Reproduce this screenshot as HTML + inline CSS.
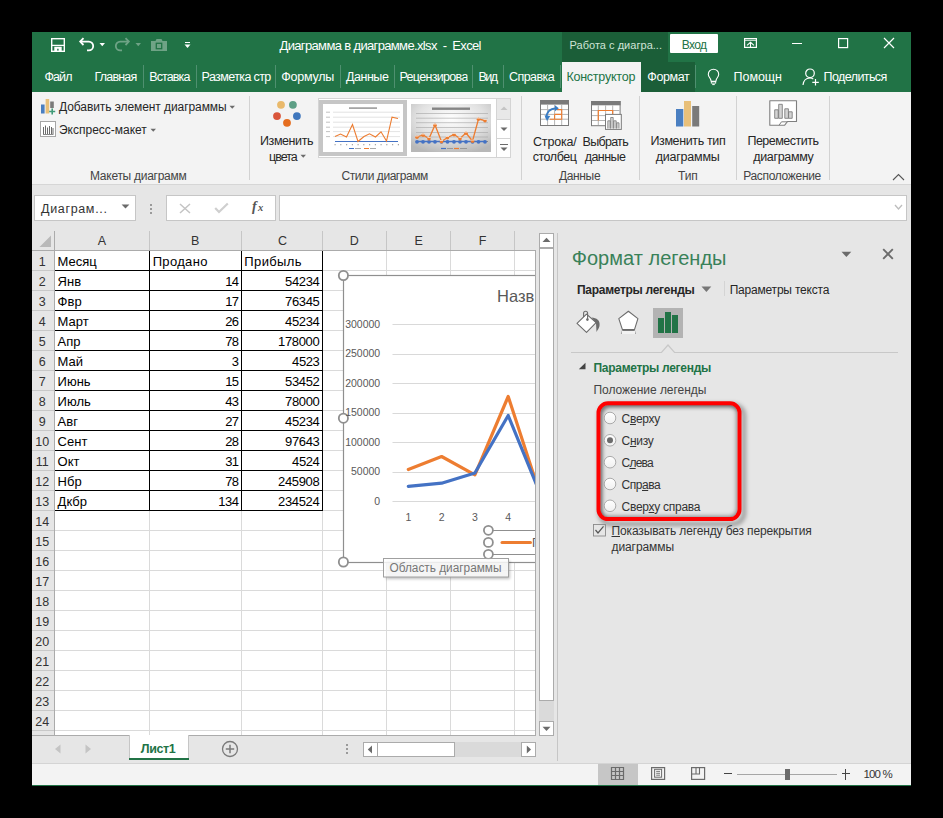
<!DOCTYPE html>
<html><head><meta charset="utf-8"><style>
html,body{margin:0;padding:0;}
body{width:943px;height:818px;background:#000;position:relative;overflow:hidden;font-family:"Liberation Sans",sans-serif;}
body>div,body>span,body>svg{position:absolute;}
span{white-space:pre;}
</style></head><body>
<div style="left:32px;top:32px;width:879px;height:754px;background:#e6e6e6;"></div>
<div style="left:32px;top:32px;width:879px;height:60px;background:#217346;"></div>
<div style="left:562px;top:32px;width:106px;height:30px;background:#1b5e38;"></div>
<div style="left:562px;top:62px;width:79px;height:30px;background:#f3f3f3;"></div>
<div style="left:641px;top:62px;width:54px;height:30px;background:#1b5e38;"></div>
<svg style="left:48px;top:35px" width="50" height="20" viewBox="48 35 50 20"><rect x="51.7" y="38.7" width="12.6" height="12.6" fill="none" stroke="#fff" stroke-width="1.4"/><line x1="51.7" y1="45.4" x2="64.3" y2="45.4" stroke="#fff" stroke-width="1.3"/><path d="M54.3 46.8 H61.7 V51.3 H58.6 V48.8 H57.2 V51.3 H54.3 Z" fill="#fff"/><path d="M83.5 38.2 L80.2 41.6 L83.5 45" fill="none" stroke="#fff" stroke-width="1.8" stroke-linejoin="miter"/><path d="M80.8 41.6 H88.8 A4.4 4.4 0 0 1 88.8 50.4 H87" fill="none" stroke="#fff" stroke-width="1.8"/></svg>
<svg style="left:99px;top:42px" width="7" height="5"><path d="M0.5 1 H6 L3.25 4.2Z" fill="#fff"/></svg>
<svg style="left:112px;top:35px" width="20" height="20" viewBox="112 35 20 20"><path d="M125.5 38.2 L128.8 41.6 L125.5 45" fill="none" stroke="#6fa386" stroke-width="1.8"/><path d="M128.2 41.6 H120.2 A4.4 4.4 0 0 0 120.2 50.4 H122" fill="none" stroke="#6fa386" stroke-width="1.8"/></svg>
<svg style="left:135px;top:42px" width="7" height="5"><path d="M0.5 1 H6 L3.25 4.2Z" fill="#6fa386"/></svg>
<svg style="left:150px;top:38px" width="18" height="14" viewBox="0 0 18 14"><path d="M1 3 H5.5 L6.5 1 H11.5 L12.5 3 H17 V13 H1 Z" fill="#6fa386"/><rect x="6.3" y="5.3" width="5.4" height="5.4" fill="none" stroke="#217346" stroke-width="1.3"/></svg>
<div style="left:185px;top:42px;width:5px;height:1.3px;background:#fff;"></div>
<svg style="left:184px;top:44px" width="7" height="5"><path d="M0.5 0.5 H6.5 L3.5 4Z" fill="#fff"/></svg>
<span style="left:279.50px;top:39.00px;font-size:13px;line-height:13px;color:#fff;letter-spacing:-0.649px;">Диаграмма в диаграмме.xlsx  -  Excel</span>
<span style="left:569.50px;top:40.00px;font-size:11px;line-height:11px;color:#cfe3d6;letter-spacing:0.029px;">Работа с диагра...</span>
<div style="left:670px;top:34px;width:48px;height:19px;background:#fff;border-radius:1px;"></div>
<span style="left:681.70px;top:39.00px;font-size:12px;line-height:12px;color:#217346;letter-spacing:-0.600px;">Вход</span>
<svg style="left:743px;top:37px" width="16" height="13" viewBox="743 37 16 13"><rect x="744.6" y="38.6" width="11.8" height="8.8" fill="none" stroke="#fff" stroke-width="1.2"/><line x1="744.6" y1="40.3" x2="756.4" y2="40.3" stroke="#fff" stroke-width="0.9"/><path d="M750.5 42.5 V47.5 M747 45.3 L750.5 42.3 L754 45.3" fill="none" stroke="#fff" stroke-width="1.1"/></svg>
<div style="left:792px;top:43px;width:10px;height:1.2px;background:#fff;"></div>
<svg style="left:837px;top:37px" width="12" height="12"><rect x="1.6" y="1.6" width="9" height="9" fill="none" stroke="#fff" stroke-width="1.2"/></svg>
<svg style="left:883px;top:37px" width="12" height="12"><path d="M1 1 L11 11 M11 1 L1 11" stroke="#fff" stroke-width="1.2"/></svg>
<span style="left:44.40px;top:71.00px;font-size:12.5px;line-height:12.5px;color:#fff;letter-spacing:-0.900px;">Файл</span>
<span style="left:94.50px;top:71.00px;font-size:12.5px;line-height:12.5px;color:#fff;letter-spacing:-0.800px;">Главная</span>
<span style="left:149.30px;top:71.00px;font-size:12.5px;line-height:12.5px;color:#fff;letter-spacing:-0.900px;">Вставка</span>
<span style="left:201.60px;top:71.00px;font-size:12.5px;line-height:12.5px;color:#fff;letter-spacing:-0.609px;">Разметка стр</span>
<span style="left:281.30px;top:71.00px;font-size:12.5px;line-height:12.5px;color:#fff;letter-spacing:-0.233px;">Формулы</span>
<span style="left:345.90px;top:71.00px;font-size:12.5px;line-height:12.5px;color:#fff;letter-spacing:-0.440px;">Данные</span>
<span style="left:399.40px;top:71.00px;font-size:12.5px;line-height:12.5px;color:#fff;letter-spacing:-0.670px;clip-path:inset(0 0 0 0);">Рецензирова</span>
<div style="left:467.6px;top:66px;width:4px;height:20px;background:#217346;"></div>
<span style="left:478.40px;top:71.00px;font-size:12.5px;line-height:12.5px;color:#fff;letter-spacing:-1.500px;">Вид</span>
<span style="left:509.00px;top:71.00px;font-size:12.5px;line-height:12.5px;color:#fff;letter-spacing:-0.550px;">Справка</span>
<span style="left:566.40px;top:71.00px;font-size:12.5px;line-height:12.5px;color:#217346;letter-spacing:-0.230px;">Конструктор</span>
<span style="left:647.30px;top:71.00px;font-size:12.5px;line-height:12.5px;color:#fff;letter-spacing:-0.400px;">Формат</span>
<span style="left:733.60px;top:71.00px;font-size:12.5px;line-height:12.5px;color:#fff;letter-spacing:-0.060px;">Помощн</span>
<span style="left:823.60px;top:71.00px;font-size:12.5px;line-height:12.5px;color:#fff;letter-spacing:-0.600px;">Поделиться</span>
<div style="left:143px;top:65px;width:1px;height:23px;background:#4f9070;"></div>
<div style="left:196px;top:65px;width:1px;height:23px;background:#4f9070;"></div>
<div style="left:275px;top:65px;width:1px;height:23px;background:#4f9070;"></div>
<div style="left:340px;top:65px;width:1px;height:23px;background:#4f9070;"></div>
<div style="left:394px;top:65px;width:1px;height:23px;background:#4f9070;"></div>
<div style="left:472px;top:65px;width:1px;height:23px;background:#4f9070;"></div>
<div style="left:503px;top:65px;width:1px;height:23px;background:#4f9070;"></div>
<div style="left:560px;top:65px;width:1px;height:23px;background:#4f9070;"></div>
<div style="left:695px;top:65px;width:1px;height:23px;background:#4f9070;"></div>
<svg style="left:706px;top:68px" width="16" height="19" viewBox="706 68 16 19"><path d="M711.2 81.3 L710.5 79 C709.3 77.2 708.3 76 708.3 74.4 A5.2 5.2 0 0 1 718.7 74.4 C718.7 76 717.7 77.2 716.5 79 L715.8 81.3 Z" fill="none" stroke="#fff" stroke-width="1.1" stroke-linejoin="round"/><rect x="711.3" y="81.5" width="4.4" height="1.6" fill="none" stroke="#fff" stroke-width="0.9"/><line x1="712.2" y1="84.6" x2="714.8" y2="84.6" stroke="#fff" stroke-width="1"/></svg>
<svg style="left:802px;top:68px" width="18" height="18" viewBox="0 0 18 18"><circle cx="8" cy="5.3" r="4.3" fill="none" stroke="#fff" stroke-width="1.2"/><path d="M1 17 C1.5 12.5 4 10 8 10 C9.5 10 10.5 10.4 11.3 10.9" fill="none" stroke="#fff" stroke-width="1.2"/><path d="M13.5 11 V17.5 M10.3 14.3 H16.8" stroke="#fff" stroke-width="1.2"/></svg>
<div style="left:32px;top:92px;width:879px;height:92px;background:#f3f3f3;"></div>
<div style="left:32px;top:184px;width:879px;height:1px;background:#d6d6d6;"></div>
<svg style="left:40px;top:98px" width="17" height="17" viewBox="0 0 17 17"><rect x="1" y="6.5" width="3.6" height="9" fill="#4a7fc1"/><rect x="5.6" y="1" width="3.6" height="14.5" fill="#e8c07a"/><rect x="10.2" y="3.5" width="3.6" height="6.5" fill="#7a7a7a"/><path d="M12.2 10.5 V16.5 M9.2 13.5 H15.2" stroke="#3f9a77" stroke-width="1.6"/></svg>
<span style="left:59.00px;top:101.00px;font-size:12px;line-height:12px;color:#262626;letter-spacing:-0.076px;">Добавить элемент диаграммы</span>
<svg style="left:229px;top:105px" width="7" height="5"><path d="M0.5 0.8 H6 L3.25 3.8Z" fill="#6b6b6b"/></svg>
<svg style="left:40px;top:121px" width="16" height="16" viewBox="0 0 16 16"><rect x="0.5" y="0.5" width="15" height="15" fill="#fff" stroke="#a6a6a6"/><path d="M3.5 13 V6 M5.5 13 V4.5 M7.5 13 V6.5 M9.5 13 V5 M11.5 13 V6 M13 13 V7" stroke="#6b6b6b" stroke-width="1"/><path d="M3 13.5 H13.5" stroke="#6b6b6b" stroke-width="0.8"/></svg>
<span style="left:59.00px;top:124.00px;font-size:12px;line-height:12px;color:#262626;letter-spacing:-0.008px;">Экспресс-макет</span>
<svg style="left:150px;top:128px" width="7" height="5"><path d="M0.5 0.8 H6 L3.25 3.8Z" fill="#6b6b6b"/></svg>
<span style="left:90.00px;top:170.00px;font-size:12px;line-height:12px;color:#444;letter-spacing:-0.271px;">Макеты диаграмм</span>
<div style="left:249px;top:96px;width:1px;height:84px;background:#d2d2d2;"></div>
<div style="left:521px;top:96px;width:1px;height:84px;background:#d2d2d2;"></div>
<div style="left:639px;top:96px;width:1px;height:84px;background:#d2d2d2;"></div>
<div style="left:736px;top:96px;width:1px;height:84px;background:#d2d2d2;"></div>
<div style="left:829px;top:96px;width:1px;height:84px;background:#d2d2d2;"></div>
<svg style="left:270px;top:97px" width="34" height="33" viewBox="0 0 34 33"><circle cx="11" cy="7.8" r="3.9" fill="#e9b96b"/><circle cx="22.9" cy="7.8" r="3.9" fill="#5e9f86"/><circle cx="7" cy="19.1" r="3.9" fill="#d9553a"/><circle cx="26.9" cy="19.1" r="3.9" fill="#3f77bd"/><circle cx="17" cy="25.8" r="3.9" fill="#e56d1f"/></svg>
<span style="left:260.00px;top:135.00px;font-size:12.5px;line-height:12.5px;color:#262626;letter-spacing:-0.414px;">Изменить</span>
<span style="left:269.00px;top:151.00px;font-size:12.5px;line-height:12.5px;color:#262626;letter-spacing:-1.000px;">цвета</span>
<svg style="left:300px;top:154px" width="7" height="5"><path d="M0.5 0.8 H6 L3.25 3.8Z" fill="#6b6b6b"/></svg>
<div style="left:318px;top:98px;width:193px;height:60px;background:#fff;box-sizing:border-box;border:1px solid #d4d4d4;"></div>
<div style="left:319px;top:100px;width:88px;height:56px;background:#c6c6c6;"></div>
<div style="left:323px;top:104px;width:80px;height:48px;background:#fff;"></div>
<svg style="left:323px;top:104px" width="80" height="48" viewBox="323 104 80 48"><rect x="349" y="107.3" width="28" height="1.6" fill="#9c9c9c"/><rect x="334.5" y="144" width="1.2" height="1.3" fill="#a8a8a8"/><rect x="340.2" y="144" width="1.2" height="1.3" fill="#a8a8a8"/><rect x="346.0" y="144" width="1.2" height="1.3" fill="#a8a8a8"/><rect x="351.8" y="144" width="1.2" height="1.3" fill="#a8a8a8"/><rect x="357.5" y="144" width="1.2" height="1.3" fill="#a8a8a8"/><rect x="363.2" y="144" width="1.2" height="1.3" fill="#a8a8a8"/><rect x="369.0" y="144" width="1.2" height="1.3" fill="#a8a8a8"/><rect x="374.8" y="144" width="1.2" height="1.3" fill="#a8a8a8"/><rect x="380.5" y="144" width="1.2" height="1.3" fill="#a8a8a8"/><rect x="386.2" y="144" width="1.2" height="1.3" fill="#a8a8a8"/><rect x="392.0" y="144" width="1.2" height="1.3" fill="#a8a8a8"/><rect x="397.8" y="144" width="1.2" height="1.3" fill="#a8a8a8"/><line x1="333" y1="112.2" x2="400" y2="112.2" stroke="#dcdcdc" stroke-width="0.8"/><line x1="326" y1="112.2" x2="330" y2="112.2" stroke="#a8a8a8" stroke-width="0.7"/><line x1="333" y1="117.2" x2="400" y2="117.2" stroke="#dcdcdc" stroke-width="0.8"/><line x1="326" y1="117.2" x2="330" y2="117.2" stroke="#a8a8a8" stroke-width="0.7"/><line x1="333" y1="122.2" x2="400" y2="122.2" stroke="#dcdcdc" stroke-width="0.8"/><line x1="326" y1="122.2" x2="330" y2="122.2" stroke="#a8a8a8" stroke-width="0.7"/><line x1="333" y1="127.2" x2="400" y2="127.2" stroke="#dcdcdc" stroke-width="0.8"/><line x1="326" y1="127.2" x2="330" y2="127.2" stroke="#a8a8a8" stroke-width="0.7"/><line x1="333" y1="131.6" x2="400" y2="131.6" stroke="#dcdcdc" stroke-width="0.8"/><line x1="326" y1="131.6" x2="330" y2="131.6" stroke="#a8a8a8" stroke-width="0.7"/><line x1="333" y1="136.6" x2="400" y2="136.6" stroke="#dcdcdc" stroke-width="0.8"/><line x1="326" y1="136.6" x2="330" y2="136.6" stroke="#a8a8a8" stroke-width="0.7"/><line x1="335" y1="141.5" x2="398" y2="141.5" stroke="#4472c4" stroke-width="1"/><polyline points="335,136.5 340.5,134 346.5,137 352.5,124.5 358,141.5 364,136.5 369.5,133.8 375.5,137 381,131.8 386.5,141 392,117.2 398,118.5" fill="none" stroke="#ed7d31" stroke-width="1.1"/><line x1="349" y1="148.5" x2="354" y2="148.5" stroke="#4472c4" stroke-width="1"/><line x1="364" y1="148.5" x2="369" y2="148.5" stroke="#ed7d31" stroke-width="1"/><rect x="355" y="148" width="6" height="1" fill="#aaa"/><rect x="370" y="148" width="6" height="1" fill="#aaa"/></svg>
<svg style="left:411px;top:104px" width="80" height="48" viewBox="411 104 80 48"><defs><radialGradient id="g2" cx="0.5" cy="0.3" r="0.75"><stop offset="0" stop-color="#ffffff"/><stop offset="0.55" stop-color="#e2e2e2"/><stop offset="1" stop-color="#b8b8b8"/></radialGradient></defs><rect x="411" y="104" width="80" height="48" fill="url(#g2)"/><rect x="432" y="107.5" width="38" height="2.4" fill="#6a6a6a" opacity="0.8"/><line x1="416" y1="113.5" x2="488" y2="113.5" stroke="#a8a8a8" stroke-width="0.9" opacity="0.7"/><line x1="416" y1="118.2" x2="488" y2="118.2" stroke="#a8a8a8" stroke-width="0.9" opacity="0.7"/><line x1="416" y1="122.7" x2="488" y2="122.7" stroke="#a8a8a8" stroke-width="0.9" opacity="0.7"/><line x1="416" y1="127.5" x2="488" y2="127.5" stroke="#a8a8a8" stroke-width="0.9" opacity="0.7"/><line x1="416" y1="132.5" x2="488" y2="132.5" stroke="#a8a8a8" stroke-width="0.9" opacity="0.7"/><line x1="416" y1="137" x2="488" y2="137" stroke="#a8a8a8" stroke-width="0.9" opacity="0.7"/><line x1="416" y1="141.5" x2="488" y2="141.5" stroke="#777" stroke-width="0.8"/><line x1="417" y1="141.5" x2="485" y2="141.5" stroke="#4472c4" stroke-width="1.5"/><circle cx="417" cy="141.8" r="1.9" fill="#4472c4"/><circle cx="423" cy="141.8" r="1.9" fill="#4472c4"/><circle cx="429" cy="141.8" r="1.9" fill="#4472c4"/><circle cx="435" cy="141.8" r="1.9" fill="#4472c4"/><circle cx="441.5" cy="141.8" r="1.9" fill="#4472c4"/><circle cx="447.5" cy="141.8" r="1.9" fill="#4472c4"/><circle cx="454" cy="141.8" r="1.9" fill="#4472c4"/><circle cx="460" cy="141.8" r="1.9" fill="#4472c4"/><circle cx="466" cy="141.8" r="1.9" fill="#4472c4"/><circle cx="472.5" cy="141.8" r="1.9" fill="#4472c4"/><circle cx="478.5" cy="141.8" r="1.9" fill="#4472c4"/><circle cx="485" cy="141.8" r="1.9" fill="#4472c4"/><polyline points="417,137 423,135 429,138.5 435,125 441.5,141.5 447.5,137.5 454,134.5 460,138.5 466,133 472.5,141 478.5,119 485,120.5" fill="none" stroke="#ed7d31" stroke-width="1.3"/><circle cx="417" cy="137.3" r="1.8" fill="#ed7d31"/><rect x="415.5" y="135.7" width="3" height="0.8" fill="#fff" opacity="0.8"/><circle cx="423" cy="135.3" r="1.8" fill="#ed7d31"/><rect x="421.5" y="133.7" width="3" height="0.8" fill="#fff" opacity="0.8"/><circle cx="429" cy="138.8" r="1.8" fill="#ed7d31"/><rect x="427.5" y="137.2" width="3" height="0.8" fill="#fff" opacity="0.8"/><circle cx="435" cy="125.3" r="1.8" fill="#ed7d31"/><rect x="433.5" y="123.7" width="3" height="0.8" fill="#fff" opacity="0.8"/><circle cx="441.5" cy="141.8" r="1.8" fill="#ed7d31"/><rect x="440.0" y="140.2" width="3" height="0.8" fill="#fff" opacity="0.8"/><circle cx="447.5" cy="137.8" r="1.8" fill="#ed7d31"/><rect x="446.0" y="136.2" width="3" height="0.8" fill="#fff" opacity="0.8"/><circle cx="454" cy="134.8" r="1.8" fill="#ed7d31"/><rect x="452.5" y="133.2" width="3" height="0.8" fill="#fff" opacity="0.8"/><circle cx="460" cy="138.8" r="1.8" fill="#ed7d31"/><rect x="458.5" y="137.2" width="3" height="0.8" fill="#fff" opacity="0.8"/><circle cx="466" cy="133.3" r="1.8" fill="#ed7d31"/><rect x="464.5" y="131.7" width="3" height="0.8" fill="#fff" opacity="0.8"/><circle cx="472.5" cy="141.3" r="1.8" fill="#ed7d31"/><rect x="471.0" y="139.7" width="3" height="0.8" fill="#fff" opacity="0.8"/><circle cx="478.5" cy="119.3" r="1.8" fill="#ed7d31"/><rect x="477.0" y="117.7" width="3" height="0.8" fill="#fff" opacity="0.8"/><circle cx="485" cy="120.8" r="1.8" fill="#ed7d31"/><rect x="483.5" y="119.2" width="3" height="0.8" fill="#fff" opacity="0.8"/><line x1="441" y1="148.5" x2="446" y2="148.5" stroke="#4472c4" stroke-width="1.2"/><line x1="454" y1="148.5" x2="459" y2="148.5" stroke="#ed7d31" stroke-width="1.2"/><rect x="447" y="148" width="6" height="1" fill="#999"/><rect x="460" y="148" width="7" height="1" fill="#999"/></svg>
<div style="left:496px;top:98px;width:15px;height:60px;background:#fff;box-sizing:border-box;border-left:1px solid #d4d4d4;border-right:1px solid #d4d4d4;border-top:1px solid #d4d4d4;border-bottom:1px solid #d4d4d4;"></div>
<div style="left:497px;top:99px;width:13px;height:20px;background:#e8e8e8;"></div>
<div style="left:497px;top:119px;width:13px;height:1px;background:#d4d4d4;"></div>
<div style="left:497px;top:138px;width:13px;height:1px;background:#d4d4d4;"></div>
<svg style="left:500px;top:106px" width="8" height="5"><path d="M0.5 4 H7.5 L4 0.5Z" fill="#c4c4c4"/></svg>
<svg style="left:500px;top:127px" width="8" height="5"><path d="M0.5 0.5 H7.5 L4 4Z" fill="#6b6b6b"/></svg>
<div style="left:500px;top:144px;width:8px;height:1.2px;background:#6b6b6b;"></div>
<svg style="left:500px;top:147px" width="8" height="5"><path d="M0.5 0.5 H7.5 L4 4Z" fill="#6b6b6b"/></svg>
<span style="left:341.60px;top:170.00px;font-size:12px;line-height:12px;color:#444;letter-spacing:-0.446px;">Стили диаграмм</span>
<svg style="left:535px;top:95px" width="95" height="40" viewBox="535 95 95 40"><rect x="540.5" y="100.5" width="28" height="25" fill="#fff" stroke="#7a7a7a" stroke-width="1"/><rect x="540" y="100" width="29" height="4.6" fill="#7a7a7a"/><path d="M547.6 104.6 V125 M554.6 104.6 V125 M561.7 104.6 V125 M541 109.6 H568 M541 114.4 H568 M541 119.2 H568" stroke="#b4b4b4" stroke-width="1"/><path d="M557 109.6 H561.7 V119.2 H550 M554.6 114.4 V119.2 M554.6 114.4 H561.7" fill="none" stroke="#ed7d31" stroke-width="1.1"/><path d="M546.5 118.5 C546 112 550 108.5 556 108.3" fill="none" stroke="#3a7cc4" stroke-width="1.8"/><path d="M544.5 115.3 L547 121 L550.3 116 Z" fill="#3a7cc4"/><path d="M555 105.3 L558.8 108.2 L555 111.2 Z" fill="#3a7cc4"/><rect x="591.5" y="101.5" width="28.6" height="24.2" fill="#fff" stroke="#7a7a7a" stroke-width="1"/><rect x="591" y="101" width="29.6" height="4.3" fill="#7a7a7a"/><path d="M598.3 105.3 V125 M605.6 105.3 V125 M612.7 105.3 V125 M592 110.5 H619.6 M592 115.6 H619.6 M592 120.5 H619.6" stroke="#b4b4b4" stroke-width="1"/><path d="M598.3 120.5 V110.5 H612.7 V114" fill="none" stroke="#ed7d31" stroke-width="1.2"/><rect x="605.5" y="114.4" width="15.8" height="15" fill="#fff" stroke="#7a7a7a" stroke-width="1"/><path d="M607.8 128.5 V120.8 H610.2 V128.5 M610.7 128.5 V117.5 H613.2 V128.5 M613.7 128.5 V120.8 H616.2 V128.5 M616.7 128.5 V122.8 H619 V128.5" fill="#d8d8d8" stroke="#7a7a7a" stroke-width="0.8"/></svg>
<span style="left:533.00px;top:136.00px;font-size:12.5px;line-height:12.5px;color:#262626;letter-spacing:-0.183px;">Строка/</span>
<span style="left:532.70px;top:151.00px;font-size:12.5px;line-height:12.5px;color:#262626;letter-spacing:-0.467px;">столбец</span>
<span style="left:582.60px;top:136.00px;font-size:12.5px;line-height:12.5px;color:#262626;letter-spacing:-0.717px;">Выбрать</span>
<span style="left:584.70px;top:151.00px;font-size:12.5px;line-height:12.5px;color:#262626;letter-spacing:-0.540px;">данные</span>
<span style="left:559.00px;top:170.00px;font-size:12px;line-height:12px;color:#444;letter-spacing:-0.360px;">Данные</span>
<svg style="left:675px;top:100px" width="26" height="28" viewBox="0 0 26 28"><rect x="1" y="9" width="7.3" height="17.5" fill="#4a7fc1"/><rect x="9" y="1" width="7" height="25.5" fill="#e8c07a"/><rect x="17.2" y="6" width="7" height="20.5" fill="#7a7a7a"/></svg>
<span style="left:650.40px;top:135.00px;font-size:12.5px;line-height:12.5px;color:#262626;letter-spacing:-0.364px;">Изменить тип</span>
<span style="left:655.70px;top:151.00px;font-size:12.5px;line-height:12.5px;color:#262626;letter-spacing:-0.225px;">диаграммы</span>
<span style="left:678.00px;top:170.00px;font-size:12px;line-height:12px;color:#444;letter-spacing:-0.150px;">Тип</span>
<svg style="left:765px;top:97px" width="36" height="32" viewBox="765 97 36 32"><path d="M769.8 100.8 H796.5 V121.5 H787.5 L784.5 125.3 H769.8 Z" fill="#fff" stroke="#7f7f7f" stroke-width="1.1" stroke-linejoin="round"/><path d="M779 125.3 L781.5 121.8 H787.5" fill="none" stroke="#7f7f7f" stroke-width="1"/><path d="M774.7 118.3 V109.8 H778.2 V118.3 Z M778.7 118.3 V104.3 H782.3 V118.3 Z M784.8 118.3 V108.8 H788.4 V118.3 Z M788.6 118.3 V111.8 H792.2 V118.3 Z" fill="#d4d4d4" stroke="#7f7f7f" stroke-width="0.9"/></svg>
<span style="left:747.40px;top:135.00px;font-size:12.5px;line-height:12.5px;color:#262626;letter-spacing:-0.500px;">Переместить</span>
<span style="left:753.20px;top:151.00px;font-size:12.5px;line-height:12.5px;color:#262626;letter-spacing:-0.325px;">диаграмму</span>
<span style="left:743.20px;top:170.00px;font-size:12px;line-height:12px;color:#444;letter-spacing:-0.318px;">Расположение</span>
<svg style="left:892px;top:173px" width="13" height="8"><path d="M1 7 L6.5 1.5 L12 7" fill="none" stroke="#555" stroke-width="1.1"/></svg>
<div style="left:34px;top:195px;width:102px;height:26px;background:#fff;box-sizing:border-box;border:1px solid #c6c6c6;"></div>
<span style="left:41.00px;top:203.00px;font-size:12.5px;line-height:12.5px;color:#333;letter-spacing:0.667px;">Диаграм...</span>
<svg style="left:121px;top:204px" width="9" height="6"><path d="M0.6 0.6 H8.4 L4.5 4.6Z" fill="#6b6b6b"/></svg>
<div style="left:150px;top:203.5px;width:2px;height:2px;background:#9a9a9a;"></div>
<div style="left:150px;top:207.5px;width:2px;height:2px;background:#9a9a9a;"></div>
<div style="left:150px;top:211.5px;width:2px;height:2px;background:#9a9a9a;"></div>
<div style="left:166px;top:195px;width:110px;height:26px;background:#fff;box-sizing:border-box;border:1px solid #c6c6c6;"></div>
<svg style="left:179px;top:203px" width="12" height="11"><path d="M1 1 L11 10 M11 1 L1 10" stroke="#c4c4c4" stroke-width="1.5"/></svg>
<svg style="left:214px;top:202px" width="15" height="12"><path d="M1.2 6 L5 10 L13.8 1.5" fill="none" stroke="#cfcfcf" stroke-width="2.2"/></svg>
<span style="left:252.00px;top:200.00px;font-size:14px;line-height:14px;color:#555;font-weight:700;font-style:italic;font-family:'Liberation Serif',serif;">f</span>
<span style="left:258.00px;top:203.00px;font-size:10.5px;line-height:10.5px;color:#555;font-weight:700;font-style:italic;font-family:'Liberation Serif',serif;">x</span>
<div style="left:279px;top:195px;width:628px;height:26px;background:#fff;box-sizing:border-box;border:1px solid #c6c6c6;"></div>
<svg style="left:894px;top:204px" width="9" height="7"><path d="M1 1 L4.5 5 L8 1" fill="none" stroke="#bdbdbd" stroke-width="1.3"/></svg>
<div style="left:55px;top:251px;width:480px;height:484px;background:#fff;"></div>
<div style="left:149px;top:251px;width:1px;height:484px;background:#dadada;"></div>
<div style="left:241px;top:251px;width:1px;height:484px;background:#dadada;"></div>
<div style="left:322px;top:251px;width:1px;height:484px;background:#dadada;"></div>
<div style="left:386px;top:251px;width:1px;height:484px;background:#dadada;"></div>
<div style="left:450px;top:251px;width:1px;height:484px;background:#dadada;"></div>
<div style="left:514px;top:251px;width:1px;height:484px;background:#dadada;"></div>
<div style="left:55px;top:270px;width:480px;height:1px;background:#dadada;"></div>
<div style="left:55px;top:290px;width:480px;height:1px;background:#dadada;"></div>
<div style="left:55px;top:310px;width:480px;height:1px;background:#dadada;"></div>
<div style="left:55px;top:330px;width:480px;height:1px;background:#dadada;"></div>
<div style="left:55px;top:350px;width:480px;height:1px;background:#dadada;"></div>
<div style="left:55px;top:370px;width:480px;height:1px;background:#dadada;"></div>
<div style="left:55px;top:390px;width:480px;height:1px;background:#dadada;"></div>
<div style="left:55px;top:410px;width:480px;height:1px;background:#dadada;"></div>
<div style="left:55px;top:430px;width:480px;height:1px;background:#dadada;"></div>
<div style="left:55px;top:450px;width:480px;height:1px;background:#dadada;"></div>
<div style="left:55px;top:470px;width:480px;height:1px;background:#dadada;"></div>
<div style="left:55px;top:490px;width:480px;height:1px;background:#dadada;"></div>
<div style="left:55px;top:510px;width:480px;height:1px;background:#dadada;"></div>
<div style="left:55px;top:530px;width:480px;height:1px;background:#dadada;"></div>
<div style="left:55px;top:550px;width:480px;height:1px;background:#dadada;"></div>
<div style="left:55px;top:570px;width:480px;height:1px;background:#dadada;"></div>
<div style="left:55px;top:590px;width:480px;height:1px;background:#dadada;"></div>
<div style="left:55px;top:610px;width:480px;height:1px;background:#dadada;"></div>
<div style="left:55px;top:630px;width:480px;height:1px;background:#dadada;"></div>
<div style="left:55px;top:650px;width:480px;height:1px;background:#dadada;"></div>
<div style="left:55px;top:670px;width:480px;height:1px;background:#dadada;"></div>
<div style="left:55px;top:690px;width:480px;height:1px;background:#dadada;"></div>
<div style="left:55px;top:710px;width:480px;height:1px;background:#dadada;"></div>
<div style="left:55px;top:730px;width:480px;height:1px;background:#dadada;"></div>
<div style="left:149px;top:231px;width:1px;height:19px;background:#c6c6c6;"></div>
<div style="left:241px;top:231px;width:1px;height:19px;background:#c6c6c6;"></div>
<div style="left:322px;top:231px;width:1px;height:19px;background:#c6c6c6;"></div>
<div style="left:386px;top:231px;width:1px;height:19px;background:#c6c6c6;"></div>
<div style="left:450px;top:231px;width:1px;height:19px;background:#c6c6c6;"></div>
<div style="left:514px;top:231px;width:1px;height:19px;background:#c6c6c6;"></div>
<div style="left:54px;top:231px;width:1px;height:504px;background:#ababab;"></div>
<div style="left:32px;top:250px;width:504px;height:1px;background:#ababab;"></div>
<div style="left:32px;top:270px;width:22px;height:1px;background:#c8c8c8;"></div>
<div style="left:32px;top:290px;width:22px;height:1px;background:#c8c8c8;"></div>
<div style="left:32px;top:310px;width:22px;height:1px;background:#c8c8c8;"></div>
<div style="left:32px;top:330px;width:22px;height:1px;background:#c8c8c8;"></div>
<div style="left:32px;top:350px;width:22px;height:1px;background:#c8c8c8;"></div>
<div style="left:32px;top:370px;width:22px;height:1px;background:#c8c8c8;"></div>
<div style="left:32px;top:390px;width:22px;height:1px;background:#c8c8c8;"></div>
<div style="left:32px;top:410px;width:22px;height:1px;background:#c8c8c8;"></div>
<div style="left:32px;top:430px;width:22px;height:1px;background:#c8c8c8;"></div>
<div style="left:32px;top:450px;width:22px;height:1px;background:#c8c8c8;"></div>
<div style="left:32px;top:470px;width:22px;height:1px;background:#c8c8c8;"></div>
<div style="left:32px;top:490px;width:22px;height:1px;background:#c8c8c8;"></div>
<div style="left:32px;top:510px;width:22px;height:1px;background:#c8c8c8;"></div>
<div style="left:32px;top:530px;width:22px;height:1px;background:#c8c8c8;"></div>
<div style="left:32px;top:550px;width:22px;height:1px;background:#c8c8c8;"></div>
<div style="left:32px;top:570px;width:22px;height:1px;background:#c8c8c8;"></div>
<div style="left:32px;top:590px;width:22px;height:1px;background:#c8c8c8;"></div>
<div style="left:32px;top:610px;width:22px;height:1px;background:#c8c8c8;"></div>
<div style="left:32px;top:630px;width:22px;height:1px;background:#c8c8c8;"></div>
<div style="left:32px;top:650px;width:22px;height:1px;background:#c8c8c8;"></div>
<div style="left:32px;top:670px;width:22px;height:1px;background:#c8c8c8;"></div>
<div style="left:32px;top:690px;width:22px;height:1px;background:#c8c8c8;"></div>
<div style="left:32px;top:710px;width:22px;height:1px;background:#c8c8c8;"></div>
<div style="left:32px;top:730px;width:22px;height:1px;background:#c8c8c8;"></div>
<div style="left:535px;top:250px;width:1px;height:486px;background:#ababab;"></div>
<div style="left:32px;top:735px;width:504px;height:1px;background:#ababab;"></div>
<svg style="left:39px;top:235px" width="13" height="13"><path d="M12 0.5 V12 H0.5 Z" fill="#b9b9b9"/></svg>
<span style="left:97.80px;top:235.00px;font-size:12.5px;line-height:12.5px;color:#333;">A</span>
<span style="left:191.05px;top:235.00px;font-size:12.5px;line-height:12.5px;color:#333;">B</span>
<span style="left:277.90px;top:235.00px;font-size:12.5px;line-height:12.5px;color:#333;">C</span>
<span style="left:349.80px;top:235.00px;font-size:12.5px;line-height:12.5px;color:#333;">D</span>
<span style="left:414.45px;top:235.00px;font-size:12.5px;line-height:12.5px;color:#333;">E</span>
<span style="left:478.80px;top:235.00px;font-size:12.5px;line-height:12.5px;color:#333;">F</span>
<span style="left:38.70px;top:256.00px;font-size:12.5px;line-height:12.5px;color:#333;">1</span>
<span style="left:38.70px;top:276.00px;font-size:12.5px;line-height:12.5px;color:#333;">2</span>
<span style="left:38.70px;top:296.00px;font-size:12.5px;line-height:12.5px;color:#333;">3</span>
<span style="left:38.70px;top:316.00px;font-size:12.5px;line-height:12.5px;color:#333;">4</span>
<span style="left:38.70px;top:336.00px;font-size:12.5px;line-height:12.5px;color:#333;">5</span>
<span style="left:38.70px;top:356.00px;font-size:12.5px;line-height:12.5px;color:#333;">6</span>
<span style="left:38.70px;top:376.00px;font-size:12.5px;line-height:12.5px;color:#333;">7</span>
<span style="left:38.70px;top:396.00px;font-size:12.5px;line-height:12.5px;color:#333;">8</span>
<span style="left:38.70px;top:416.00px;font-size:12.5px;line-height:12.5px;color:#333;">9</span>
<span style="left:35.25px;top:436.00px;font-size:12.5px;line-height:12.5px;color:#333;">10</span>
<span style="left:35.70px;top:456.00px;font-size:12.5px;line-height:12.5px;color:#333;">11</span>
<span style="left:35.25px;top:476.00px;font-size:12.5px;line-height:12.5px;color:#333;">12</span>
<span style="left:35.25px;top:496.00px;font-size:12.5px;line-height:12.5px;color:#333;">13</span>
<span style="left:35.25px;top:516.00px;font-size:12.5px;line-height:12.5px;color:#333;">14</span>
<span style="left:35.25px;top:536.00px;font-size:12.5px;line-height:12.5px;color:#333;">15</span>
<span style="left:35.25px;top:556.00px;font-size:12.5px;line-height:12.5px;color:#333;">16</span>
<span style="left:35.25px;top:576.00px;font-size:12.5px;line-height:12.5px;color:#333;">17</span>
<span style="left:35.25px;top:596.00px;font-size:12.5px;line-height:12.5px;color:#333;">18</span>
<span style="left:35.25px;top:616.00px;font-size:12.5px;line-height:12.5px;color:#333;">19</span>
<span style="left:35.25px;top:636.00px;font-size:12.5px;line-height:12.5px;color:#333;">20</span>
<span style="left:35.25px;top:656.00px;font-size:12.5px;line-height:12.5px;color:#333;">21</span>
<span style="left:35.25px;top:676.00px;font-size:12.5px;line-height:12.5px;color:#333;">22</span>
<span style="left:35.25px;top:696.00px;font-size:12.5px;line-height:12.5px;color:#333;">23</span>
<span style="left:35.25px;top:716.00px;font-size:12.5px;line-height:12.5px;color:#333;">24</span>
<div style="left:149px;top:251px;width:1px;height:260px;background:#000;"></div>
<div style="left:241px;top:251px;width:1px;height:260px;background:#000;"></div>
<div style="left:322px;top:251px;width:1px;height:260px;background:#000;"></div>
<div style="left:55px;top:270px;width:268px;height:1px;background:#000;"></div>
<div style="left:55px;top:290px;width:268px;height:1px;background:#000;"></div>
<div style="left:55px;top:310px;width:268px;height:1px;background:#000;"></div>
<div style="left:55px;top:330px;width:268px;height:1px;background:#000;"></div>
<div style="left:55px;top:350px;width:268px;height:1px;background:#000;"></div>
<div style="left:55px;top:370px;width:268px;height:1px;background:#000;"></div>
<div style="left:55px;top:390px;width:268px;height:1px;background:#000;"></div>
<div style="left:55px;top:410px;width:268px;height:1px;background:#000;"></div>
<div style="left:55px;top:430px;width:268px;height:1px;background:#000;"></div>
<div style="left:55px;top:450px;width:268px;height:1px;background:#000;"></div>
<div style="left:55px;top:470px;width:268px;height:1px;background:#000;"></div>
<div style="left:55px;top:490px;width:268px;height:1px;background:#000;"></div>
<div style="left:55px;top:510px;width:268px;height:1px;background:#000;"></div>
<span style="left:57.60px;top:255.00px;font-size:13px;line-height:13px;color:#000;">Месяц</span>
<span style="left:152.70px;top:255.00px;font-size:13px;line-height:13px;color:#000;letter-spacing:0.333px;">Продано</span>
<span style="left:244.30px;top:255.00px;font-size:13px;line-height:13px;color:#000;letter-spacing:0.383px;">Прибыль</span>
<span style="left:57.60px;top:275.00px;font-size:13px;line-height:13px;color:#000;">Янв</span>
<span style="left:225.30px;top:275.00px;font-size:13px;line-height:13px;color:#000;letter-spacing:-0.900px;">14</span>
<span style="left:285.10px;top:275.00px;font-size:13px;line-height:13px;color:#000;letter-spacing:-0.375px;">54234</span>
<span style="left:57.60px;top:295.00px;font-size:13px;line-height:13px;color:#000;">Фвр</span>
<span style="left:225.30px;top:295.00px;font-size:13px;line-height:13px;color:#000;letter-spacing:-0.900px;">17</span>
<span style="left:285.10px;top:295.00px;font-size:13px;line-height:13px;color:#000;letter-spacing:-0.375px;">76345</span>
<span style="left:57.60px;top:315.00px;font-size:13px;line-height:13px;color:#000;">Март</span>
<span style="left:225.30px;top:315.00px;font-size:13px;line-height:13px;color:#000;letter-spacing:-0.900px;">26</span>
<span style="left:285.10px;top:315.00px;font-size:13px;line-height:13px;color:#000;letter-spacing:-0.375px;">45234</span>
<span style="left:57.60px;top:335.00px;font-size:13px;line-height:13px;color:#000;">Апр</span>
<span style="left:225.30px;top:335.00px;font-size:13px;line-height:13px;color:#000;letter-spacing:-0.900px;">78</span>
<span style="left:278.10px;top:335.00px;font-size:13px;line-height:13px;color:#000;letter-spacing:-0.360px;">178000</span>
<span style="left:57.60px;top:355.00px;font-size:13px;line-height:13px;color:#000;">Май</span>
<span style="left:231.70px;top:355.00px;font-size:13px;line-height:13px;color:#000;">3</span>
<span style="left:292.10px;top:355.00px;font-size:13px;line-height:13px;color:#000;letter-spacing:-0.433px;">4523</span>
<span style="left:57.60px;top:375.00px;font-size:13px;line-height:13px;color:#000;">Июнь</span>
<span style="left:225.30px;top:375.00px;font-size:13px;line-height:13px;color:#000;letter-spacing:-0.900px;">15</span>
<span style="left:285.10px;top:375.00px;font-size:13px;line-height:13px;color:#000;letter-spacing:-0.375px;">53452</span>
<span style="left:57.60px;top:395.00px;font-size:13px;line-height:13px;color:#000;">Июль</span>
<span style="left:225.30px;top:395.00px;font-size:13px;line-height:13px;color:#000;letter-spacing:-0.900px;">43</span>
<span style="left:285.10px;top:395.00px;font-size:13px;line-height:13px;color:#000;letter-spacing:-0.375px;">78000</span>
<span style="left:57.60px;top:415.00px;font-size:13px;line-height:13px;color:#000;">Авг</span>
<span style="left:225.30px;top:415.00px;font-size:13px;line-height:13px;color:#000;letter-spacing:-0.900px;">27</span>
<span style="left:285.10px;top:415.00px;font-size:13px;line-height:13px;color:#000;letter-spacing:-0.375px;">45234</span>
<span style="left:57.60px;top:435.00px;font-size:13px;line-height:13px;color:#000;">Сент</span>
<span style="left:225.30px;top:435.00px;font-size:13px;line-height:13px;color:#000;letter-spacing:-0.900px;">28</span>
<span style="left:285.10px;top:435.00px;font-size:13px;line-height:13px;color:#000;letter-spacing:-0.375px;">97643</span>
<span style="left:57.60px;top:455.00px;font-size:13px;line-height:13px;color:#000;">Окт</span>
<span style="left:225.30px;top:455.00px;font-size:13px;line-height:13px;color:#000;letter-spacing:-0.900px;">31</span>
<span style="left:292.10px;top:455.00px;font-size:13px;line-height:13px;color:#000;letter-spacing:-0.433px;">4524</span>
<span style="left:57.60px;top:475.00px;font-size:13px;line-height:13px;color:#000;">Нбр</span>
<span style="left:225.30px;top:475.00px;font-size:13px;line-height:13px;color:#000;letter-spacing:-0.900px;">78</span>
<span style="left:278.10px;top:475.00px;font-size:13px;line-height:13px;color:#000;letter-spacing:-0.360px;">245908</span>
<span style="left:57.60px;top:495.00px;font-size:13px;line-height:13px;color:#000;">Дкбр</span>
<span style="left:218.30px;top:495.00px;font-size:13px;line-height:13px;color:#000;letter-spacing:-0.550px;">134</span>
<span style="left:278.10px;top:495.00px;font-size:13px;line-height:13px;color:#000;letter-spacing:-0.360px;">234524</span>
<svg style="left:0px;top:0px" width="943" height="818" viewBox="0 0 943 818"><defs><clipPath id="gc"><rect x="0" y="251" width="535" height="484"/></clipPath><filter id="sh" x="-10%" y="-30%" width="130%" height="180%"><feGaussianBlur stdDeviation="1.5"/></filter></defs><g clip-path="url(#gc)"><rect x="343.5" y="275.5" width="400" height="287" fill="#fff" stroke="#8f8f8f" stroke-width="1.2"/><line x1="392.5" y1="324.5" x2="600" y2="324.5" stroke="#d9d9d9" stroke-width="1"/><line x1="392.5" y1="354.5" x2="600" y2="354.5" stroke="#d9d9d9" stroke-width="1"/><line x1="392.5" y1="383.5" x2="600" y2="383.5" stroke="#d9d9d9" stroke-width="1"/><line x1="392.5" y1="413.5" x2="600" y2="413.5" stroke="#d9d9d9" stroke-width="1"/><line x1="392.5" y1="442.5" x2="600" y2="442.5" stroke="#d9d9d9" stroke-width="1"/><line x1="392.5" y1="472.5" x2="600" y2="472.5" stroke="#d9d9d9" stroke-width="1"/><line x1="392.5" y1="501.5" x2="600" y2="501.5" stroke="#d9d9d9" stroke-width="1"/><polyline points="408.3,469.5 441.6,456.5 474.9,474.8 508.2,396.5 541.5,498.8 574.8,470.0" fill="none" stroke="#ed7d31" stroke-width="3.2" stroke-linejoin="round" stroke-linecap="round"/><polyline points="408.3,486.4 441.6,483.2 474.9,473.0 508.2,415.5 541.5,497.0 574.8,485.0" fill="none" stroke="#4472c4" stroke-width="3.2" stroke-linejoin="round" stroke-linecap="round"/><line x1="493" y1="530.5" x2="600" y2="530.5" stroke="#8f8f8f" stroke-width="1.2"/><line x1="493" y1="554.5" x2="600" y2="554.5" stroke="#8f8f8f" stroke-width="1.2"/><line x1="502" y1="542.5" x2="530.5" y2="542.5" stroke="#ed7d31" stroke-width="3" stroke-linecap="round"/><text x="532" y="547" font-size="12" fill="#595959" font-family="Liberation Sans">П</text><circle cx="488.4" cy="530.3" r="4.5" fill="#fff" stroke="#8f8f8f" stroke-width="1.8"/><circle cx="488.4" cy="542.4" r="4.5" fill="#fff" stroke="#8f8f8f" stroke-width="1.8"/><circle cx="488.4" cy="554.3" r="4.5" fill="#fff" stroke="#8f8f8f" stroke-width="1.8"/><circle cx="343.4" cy="275.5" r="4.6" fill="#fff" stroke="#8f8f8f" stroke-width="1.8"/><circle cx="343.4" cy="418.2" r="4.6" fill="#fff" stroke="#8f8f8f" stroke-width="1.8"/><circle cx="343.4" cy="562" r="4.6" fill="#fff" stroke="#8f8f8f" stroke-width="1.8"/><text x="497" y="301.7" font-size="16.5" fill="#595959" font-family="Liberation Sans">Назв</text><text x="380.2" y="327.6" font-size="10.5" fill="#595959" text-anchor="end" font-family="Liberation Sans">300000</text><text x="380.2" y="357.1" font-size="10.5" fill="#595959" text-anchor="end" font-family="Liberation Sans">250000</text><text x="380.2" y="386.6" font-size="10.5" fill="#595959" text-anchor="end" font-family="Liberation Sans">200000</text><text x="380.2" y="416.1" font-size="10.5" fill="#595959" text-anchor="end" font-family="Liberation Sans">150000</text><text x="380.2" y="445.6" font-size="10.5" fill="#595959" text-anchor="end" font-family="Liberation Sans">100000</text><text x="380.2" y="475.1" font-size="10.5" fill="#595959" text-anchor="end" font-family="Liberation Sans">50000</text><text x="380.2" y="504.6" font-size="10.5" fill="#595959" text-anchor="end" font-family="Liberation Sans">0</text><text x="408.3" y="520.7" font-size="10.5" fill="#595959" text-anchor="middle" font-family="Liberation Sans">1</text><text x="441.6" y="520.7" font-size="10.5" fill="#595959" text-anchor="middle" font-family="Liberation Sans">2</text><text x="474.9" y="520.7" font-size="10.5" fill="#595959" text-anchor="middle" font-family="Liberation Sans">3</text><text x="508.2" y="520.7" font-size="10.5" fill="#595959" text-anchor="middle" font-family="Liberation Sans">4</text><rect x="386" y="561" width="124" height="18" fill="#000" opacity="0.25" filter="url(#sh)"/><rect x="383.5" y="558.5" width="125" height="18.5" fill="#fff" fill-opacity="0.85" stroke="#a0a0a0" stroke-width="1"/><text x="389.5" y="571.5" font-size="12" fill="#767676" font-family="Liberation Sans" textLength="112" lengthAdjust="spacingAndGlyphs">Область диаграммы</text></g></svg>
<div style="left:539px;top:233px;width:15px;height:15px;background:#fff;box-sizing:border-box;border:1px solid #ababab;"></div>
<svg style="left:542px;top:237px" width="9" height="6"><path d="M0.5 5 H8.5 L4.5 0.8Z" fill="#6b6b6b"/></svg>
<div style="left:539px;top:248px;width:15px;height:475px;background:#dadada;"></div>
<div style="left:539px;top:248px;width:15px;height:453px;background:#fff;box-sizing:border-box;border:1px solid #ababab;"></div>
<div style="left:539px;top:721px;width:15px;height:15px;background:#fff;box-sizing:border-box;border:1px solid #ababab;"></div>
<svg style="left:542px;top:726px" width="9" height="6"><path d="M0.5 0.8 H8.5 L4.5 5Z" fill="#6b6b6b"/></svg>
<div style="left:557px;top:233px;width:1px;height:528px;background:#c6c6c6;"></div>
<div style="left:32px;top:736px;width:525px;height:27px;background:#e6e6e6;"></div>
<svg style="left:54px;top:744px" width="8" height="10"><path d="M6.5 0.5 V9.5 L1 5Z" fill="#c4c4c4"/></svg>
<svg style="left:84px;top:744px" width="8" height="10"><path d="M1.5 0.5 V9.5 L7 5Z" fill="#c4c4c4"/></svg>
<div style="left:129px;top:735px;width:60px;height:25px;background:#fff;box-sizing:border-box;border-left:1px solid #c6c6c6;border-right:1px solid #c6c6c6;"></div>
<div style="left:129px;top:758px;width:60px;height:2px;background:#217346;"></div>
<span style="left:140.80px;top:743.00px;font-size:12.5px;line-height:12.5px;color:#217346;font-weight:700;letter-spacing:-0.375px;">Лист1</span>
<svg style="left:221px;top:740px" width="18" height="18"><circle cx="9" cy="9" r="7.5" fill="none" stroke="#7a7a7a" stroke-width="1.3"/><path d="M9 4.8 V13.2 M4.8 9 H13.2" stroke="#7a7a7a" stroke-width="1.5"/></svg>
<div style="left:346px;top:744px;width:2px;height:2px;background:#9a9a9a;"></div>
<div style="left:346px;top:748px;width:2px;height:2px;background:#9a9a9a;"></div>
<div style="left:346px;top:752px;width:2px;height:2px;background:#9a9a9a;"></div>
<div style="left:363px;top:742px;width:15px;height:15px;background:#fff;box-sizing:border-box;border:1px solid #ababab;"></div>
<svg style="left:367px;top:745px" width="6" height="9"><path d="M5 0.5 V8.5 L0.8 4.5Z" fill="#6b6b6b"/></svg>
<div style="left:378px;top:742px;width:143px;height:15px;background:#dadada;"></div>
<div style="left:377px;top:742px;width:78px;height:15px;background:#fff;box-sizing:border-box;border:1px solid #ababab;"></div>
<div style="left:521px;top:742px;width:15px;height:15px;background:#fff;box-sizing:border-box;border:1px solid #ababab;"></div>
<svg style="left:526px;top:745px" width="6" height="9"><path d="M0.8 0.5 V8.5 L5 4.5Z" fill="#6b6b6b"/></svg>
<span style="left:571.70px;top:248.00px;font-size:20px;line-height:20px;color:#398159;letter-spacing:0.023px;">Формат легенды</span>
<svg style="left:841px;top:251px" width="11" height="7"><path d="M0.5 0.8 H10.3 L5.4 6Z" fill="#6b6b6b"/></svg>
<svg style="left:882px;top:248px" width="12" height="12"><path d="M1.2 1.2 L10.8 10.8 M10.8 1.2 L1.2 10.8" stroke="#6b6b6b" stroke-width="1.9"/></svg>
<span style="left:577.00px;top:284.00px;font-size:12px;line-height:12px;color:#262626;font-weight:700;letter-spacing:-0.294px;">Параметры легенды</span>
<svg style="left:701px;top:286px" width="11" height="7"><path d="M0.5 0.5 H10.3 L5.4 6Z" fill="#777"/></svg>
<div style="left:724px;top:281px;width:1px;height:15px;background:#d4d4d4;"></div>
<span style="left:729.70px;top:284.00px;font-size:12px;line-height:12px;color:#262626;letter-spacing:-0.207px;">Параметры текста</span>
<svg style="left:572px;top:306px" width="72" height="34" viewBox="572 306 72 34"><path d="M577 323.4 L586.5 314.2 L596.1 322.7 L586.5 332.4 Z" fill="#fff" stroke="#6b6b6b" stroke-width="1.1" stroke-linejoin="round"/><path d="M583.6 317 V313.2 A2 2 0 0 1 587.6 313.2 V319.2" fill="none" stroke="#6b6b6b" stroke-width="1.1"/><circle cx="587.4" cy="319.6" r="1.3" fill="#6b6b6b"/><path d="M591.5 317.5 C596.5 318 600.5 320 599.5 326 C599 328.5 597.5 330 596.5 332 L596 323 Z" fill="#6b6b6b"/><path d="M628.4 311.3 L637.9 318.6 L634.4 329.9 L622.5 329.9 L618.8 318.6 Z" fill="#fff" stroke="#6b6b6b" stroke-width="1.1" stroke-linejoin="round"/><line x1="622.5" y1="329.9" x2="634.4" y2="329.9" stroke="#6b6b6b" stroke-width="1.8"/><path d="M622.5 330 L621.3 334 M634.4 330 L635.6 334" stroke="#9a9a9a" stroke-width="0.9"/><rect x="622" y="331" width="13" height="3" fill="#f2f2f2"/></svg>
<div style="left:653px;top:308px;width:30px;height:30px;background:#b3b3b3;"></div>
<div style="left:658px;top:318px;width:6px;height:15px;background:#217346;"></div>
<div style="left:665px;top:312px;width:6px;height:21px;background:#217346;"></div>
<div style="left:672px;top:315px;width:6px;height:18px;background:#217346;"></div>
<svg style="left:570px;top:343px" width="330" height="11" viewBox="570 343 330 11"><path d="M571 352.5 H661.5 L668 345 L674.5 352.5 H898" fill="none" stroke="#c8c8c8" stroke-width="1.2"/></svg>
<svg style="left:578px;top:362px" width="9" height="8"><path d="M7.5 0.8 V7.2 H0.8 Z" fill="#444"/></svg>
<span style="left:593.50px;top:362.00px;font-size:12px;line-height:12px;color:#217346;font-weight:700;letter-spacing:-0.294px;">Параметры легенды</span>
<span style="left:593.40px;top:384.00px;font-size:12px;line-height:12px;color:#444;letter-spacing:-0.025px;">Положение легенды</span>
<svg style="left:588px;top:394px" width="165" height="138" viewBox="588 394 165 138"><defs><filter id="ds" x="-20%" y="-20%" width="140%" height="140%"><feGaussianBlur stdDeviation="2"/></filter><clipPath id="inn"><rect x="600.5" y="405" width="137" height="112.5" rx="8"/></clipPath></defs><rect x="600" y="405" width="144" height="119" rx="11" fill="none" stroke="#000" stroke-opacity="0.35" stroke-width="4" filter="url(#ds)"/><g clip-path="url(#inn)"><rect x="598.5" y="403.3" width="141" height="116" rx="10" fill="none" stroke="#000" stroke-opacity="0.45" stroke-width="6" filter="url(#ds)"/></g><rect x="598.5" y="403.3" width="141" height="115.8" rx="9.5" fill="none" stroke="#ff0000" stroke-width="4"/></svg>
<svg style="left:603px;top:411px" width="14" height="14" viewBox="0 0 14 14"><defs><linearGradient id="rg0" x1="0" y1="0" x2="0" y2="1"><stop offset="0" stop-color="#ffffff"/><stop offset="1" stop-color="#f0f0f0"/></linearGradient></defs><circle cx="7" cy="7.0" r="5.8" fill="url(#rg0)" stroke="#a3a3a3" stroke-width="0.9"/></svg>
<span style="left:621.60px;top:413.00px;font-size:12px;line-height:12px;color:#333;letter-spacing:-0.300px;">С<u style="text-decoration-thickness:1px;text-underline-offset:0.5px">в</u>ерху</span>
<svg style="left:603px;top:433px" width="14" height="14" viewBox="0 0 14 14"><defs><linearGradient id="rg1" x1="0" y1="0" x2="0" y2="1"><stop offset="0" stop-color="#ffffff"/><stop offset="1" stop-color="#f0f0f0"/></linearGradient></defs><circle cx="7" cy="7.3" r="5.8" fill="url(#rg1)" stroke="#a3a3a3" stroke-width="0.9"/><circle cx="7" cy="7.3" r="3" fill="#6b6b6b"/></svg>
<span style="left:621.60px;top:435.00px;font-size:12px;line-height:12px;color:#333;letter-spacing:-0.325px;">С<u style="text-decoration-thickness:1px;text-underline-offset:0.5px">н</u>изу</span>
<svg style="left:603px;top:455px" width="14" height="14" viewBox="0 0 14 14"><defs><linearGradient id="rg2" x1="0" y1="0" x2="0" y2="1"><stop offset="0" stop-color="#ffffff"/><stop offset="1" stop-color="#f0f0f0"/></linearGradient></defs><circle cx="7" cy="7.2" r="5.8" fill="url(#rg2)" stroke="#a3a3a3" stroke-width="0.9"/></svg>
<span style="left:621.60px;top:457.00px;font-size:12px;line-height:12px;color:#333;letter-spacing:-0.800px;">С<u style="text-decoration-thickness:1px;text-underline-offset:0.5px">л</u>ева</span>
<svg style="left:603px;top:477px" width="14" height="14" viewBox="0 0 14 14"><defs><linearGradient id="rg3" x1="0" y1="0" x2="0" y2="1"><stop offset="0" stop-color="#ffffff"/><stop offset="1" stop-color="#f0f0f0"/></linearGradient></defs><circle cx="7" cy="7.0" r="5.8" fill="url(#rg3)" stroke="#a3a3a3" stroke-width="0.9"/></svg>
<span style="left:621.60px;top:479.00px;font-size:12px;line-height:12px;color:#333;letter-spacing:-0.480px;">Спр<u style="text-decoration-thickness:1px;text-underline-offset:0.5px">а</u>ва</span>
<svg style="left:603px;top:498px" width="14" height="14" viewBox="0 0 14 14"><defs><linearGradient id="rg4" x1="0" y1="0" x2="0" y2="1"><stop offset="0" stop-color="#ffffff"/><stop offset="1" stop-color="#f0f0f0"/></linearGradient></defs><circle cx="7" cy="7.8" r="5.8" fill="url(#rg4)" stroke="#a3a3a3" stroke-width="0.9"/></svg>
<span style="left:621.60px;top:501.00px;font-size:12px;line-height:12px;color:#333;letter-spacing:-0.283px;">Свер<u style="text-decoration-thickness:1px;text-underline-offset:0.5px">х</u>у справа</span>
<svg style="left:593px;top:524px" width="14" height="13"><rect x="0.5" y="0.5" width="12" height="11.5" fill="none" stroke="#8a8a8a" stroke-width="0.9"/><path d="M2.5 6 L5 9 L10.5 2.3" fill="none" stroke="#555" stroke-width="1.2"/></svg>
<span style="left:611.50px;top:525.00px;font-size:12px;line-height:12px;color:#333;letter-spacing:-0.131px;"><u style="text-decoration-thickness:1px;text-underline-offset:0.5px">П</u>оказывать легенду без перекрытия</span>
<span style="left:611.50px;top:541.00px;font-size:12px;line-height:12px;color:#333;letter-spacing:-0.088px;">диаграммы</span>
<div style="left:32px;top:763px;width:879px;height:22px;background:#f3f3f3;"></div>
<div style="left:32px;top:763px;width:879px;height:1px;background:#d4d4d4;"></div>
<div style="left:32px;top:785px;width:879px;height:1px;background:#217346;"></div>
<div style="left:598px;top:764px;width:40px;height:21px;background:#c6c6c6;"></div>
<svg style="left:610px;top:766px" width="15" height="15" viewBox="0 0 15 15"><path d="M1.5 1.5 H13.5 V13.5 H1.5 Z M5.5 1.5 V13.5 M9.5 1.5 V13.5 M1.5 5.5 H13.5 M1.5 9.5 H13.5" fill="none" stroke="#6b6b6b" stroke-width="1.2"/></svg>
<svg style="left:645px;top:762px" width="65" height="23" viewBox="645 762 65 23"><rect x="651.6" y="767.6" width="13" height="11.8" fill="none" stroke="#6b6b6b" stroke-width="1.2"/><rect x="654.6" y="769.3" width="7" height="7.9" fill="none" stroke="#6b6b6b" stroke-width="1"/><path d="M656.2 771.4 H660 M656.2 773.3 H660 M656.2 775.2 H660" stroke="#6b6b6b" stroke-width="0.9"/><rect x="691.6" y="767.6" width="13" height="11.8" fill="none" stroke="#6b6b6b" stroke-width="1.2"/><path d="M691.6 774 H699.5 V767.6 M696 767.6 V774" fill="none" stroke="#6b6b6b" stroke-width="1.1"/></svg>
<div style="left:724px;top:773px;width:8px;height:1.3px;background:#444;"></div>
<div style="left:737px;top:773.5px;width:100px;height:1px;background:#a6a6a6;"></div>
<div style="left:785px;top:769px;width:5px;height:11px;background:#6b6b6b;"></div>
<div style="left:842px;top:773px;width:8px;height:1.2px;background:#444;"></div>
<div style="left:845.3px;top:769px;width:1.2px;height:10.5px;background:#444;"></div>
<span style="left:863.50px;top:769.00px;font-size:11.5px;line-height:11.5px;color:#333;letter-spacing:-0.875px;">100 %</span>
</body></html>
